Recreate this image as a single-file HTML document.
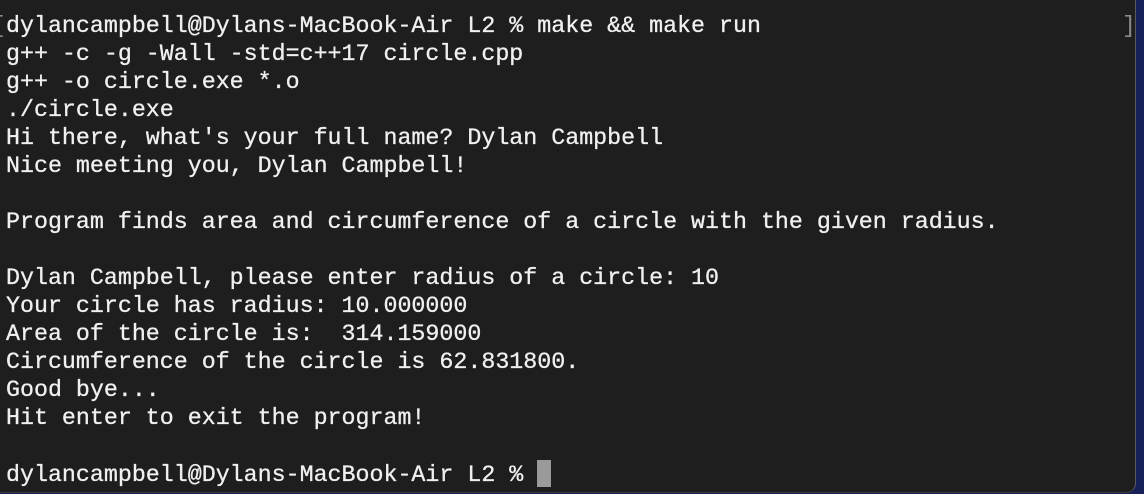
<!DOCTYPE html>
<html><head><style>
html,body{margin:0;padding:0;width:1144px;height:494px;overflow:hidden;background:#16215a;}
.win{position:absolute;left:0;top:0;width:1135px;height:492px;background:#1e1e1e;border-right:1px solid #5a5a5a;border-bottom:1px solid #3a3a3a;border-bottom-right-radius:10px;}
pre{position:absolute;left:6px;top:12px;margin:0;font-family:"Liberation Mono",monospace;font-size:23.3px;line-height:28px;color:#f0f0f0;-webkit-text-stroke:0.3px #f0f0f0;}
.br{position:absolute;font-family:"Liberation Mono",monospace;font-size:23px;color:#8a8a8a;top:12px;line-height:28px;}
.cur{display:inline-block;width:14px;height:27px;background:#9a9a9a;vertical-align:-6px;}
</style></head><body>
<div class="win">
<span class="br" style="left:-8px">[</span>
<span class="br" style="left:1122px">]</span>
<pre>dylancampbell@Dylans-MacBook-Air L2 % make &amp;&amp; make run
g++ -c -g -Wall -std=c++17 circle.cpp
g++ -o circle.exe *.o
./circle.exe
Hi there, what's your full name? Dylan Campbell
Nice meeting you, Dylan Campbell!

Program finds area and circumference of a circle with the given radius.

Dylan Campbell, please enter radius of a circle: 10
Your circle has radius: 10.000000
Area of the circle is:  314.159000
Circumference of the circle is 62.831800.
Good bye...
Hit enter to exit the program!

dylancampbell@Dylans-MacBook-Air L2 % <span class="cur"></span></pre>
</div>
</body></html>
